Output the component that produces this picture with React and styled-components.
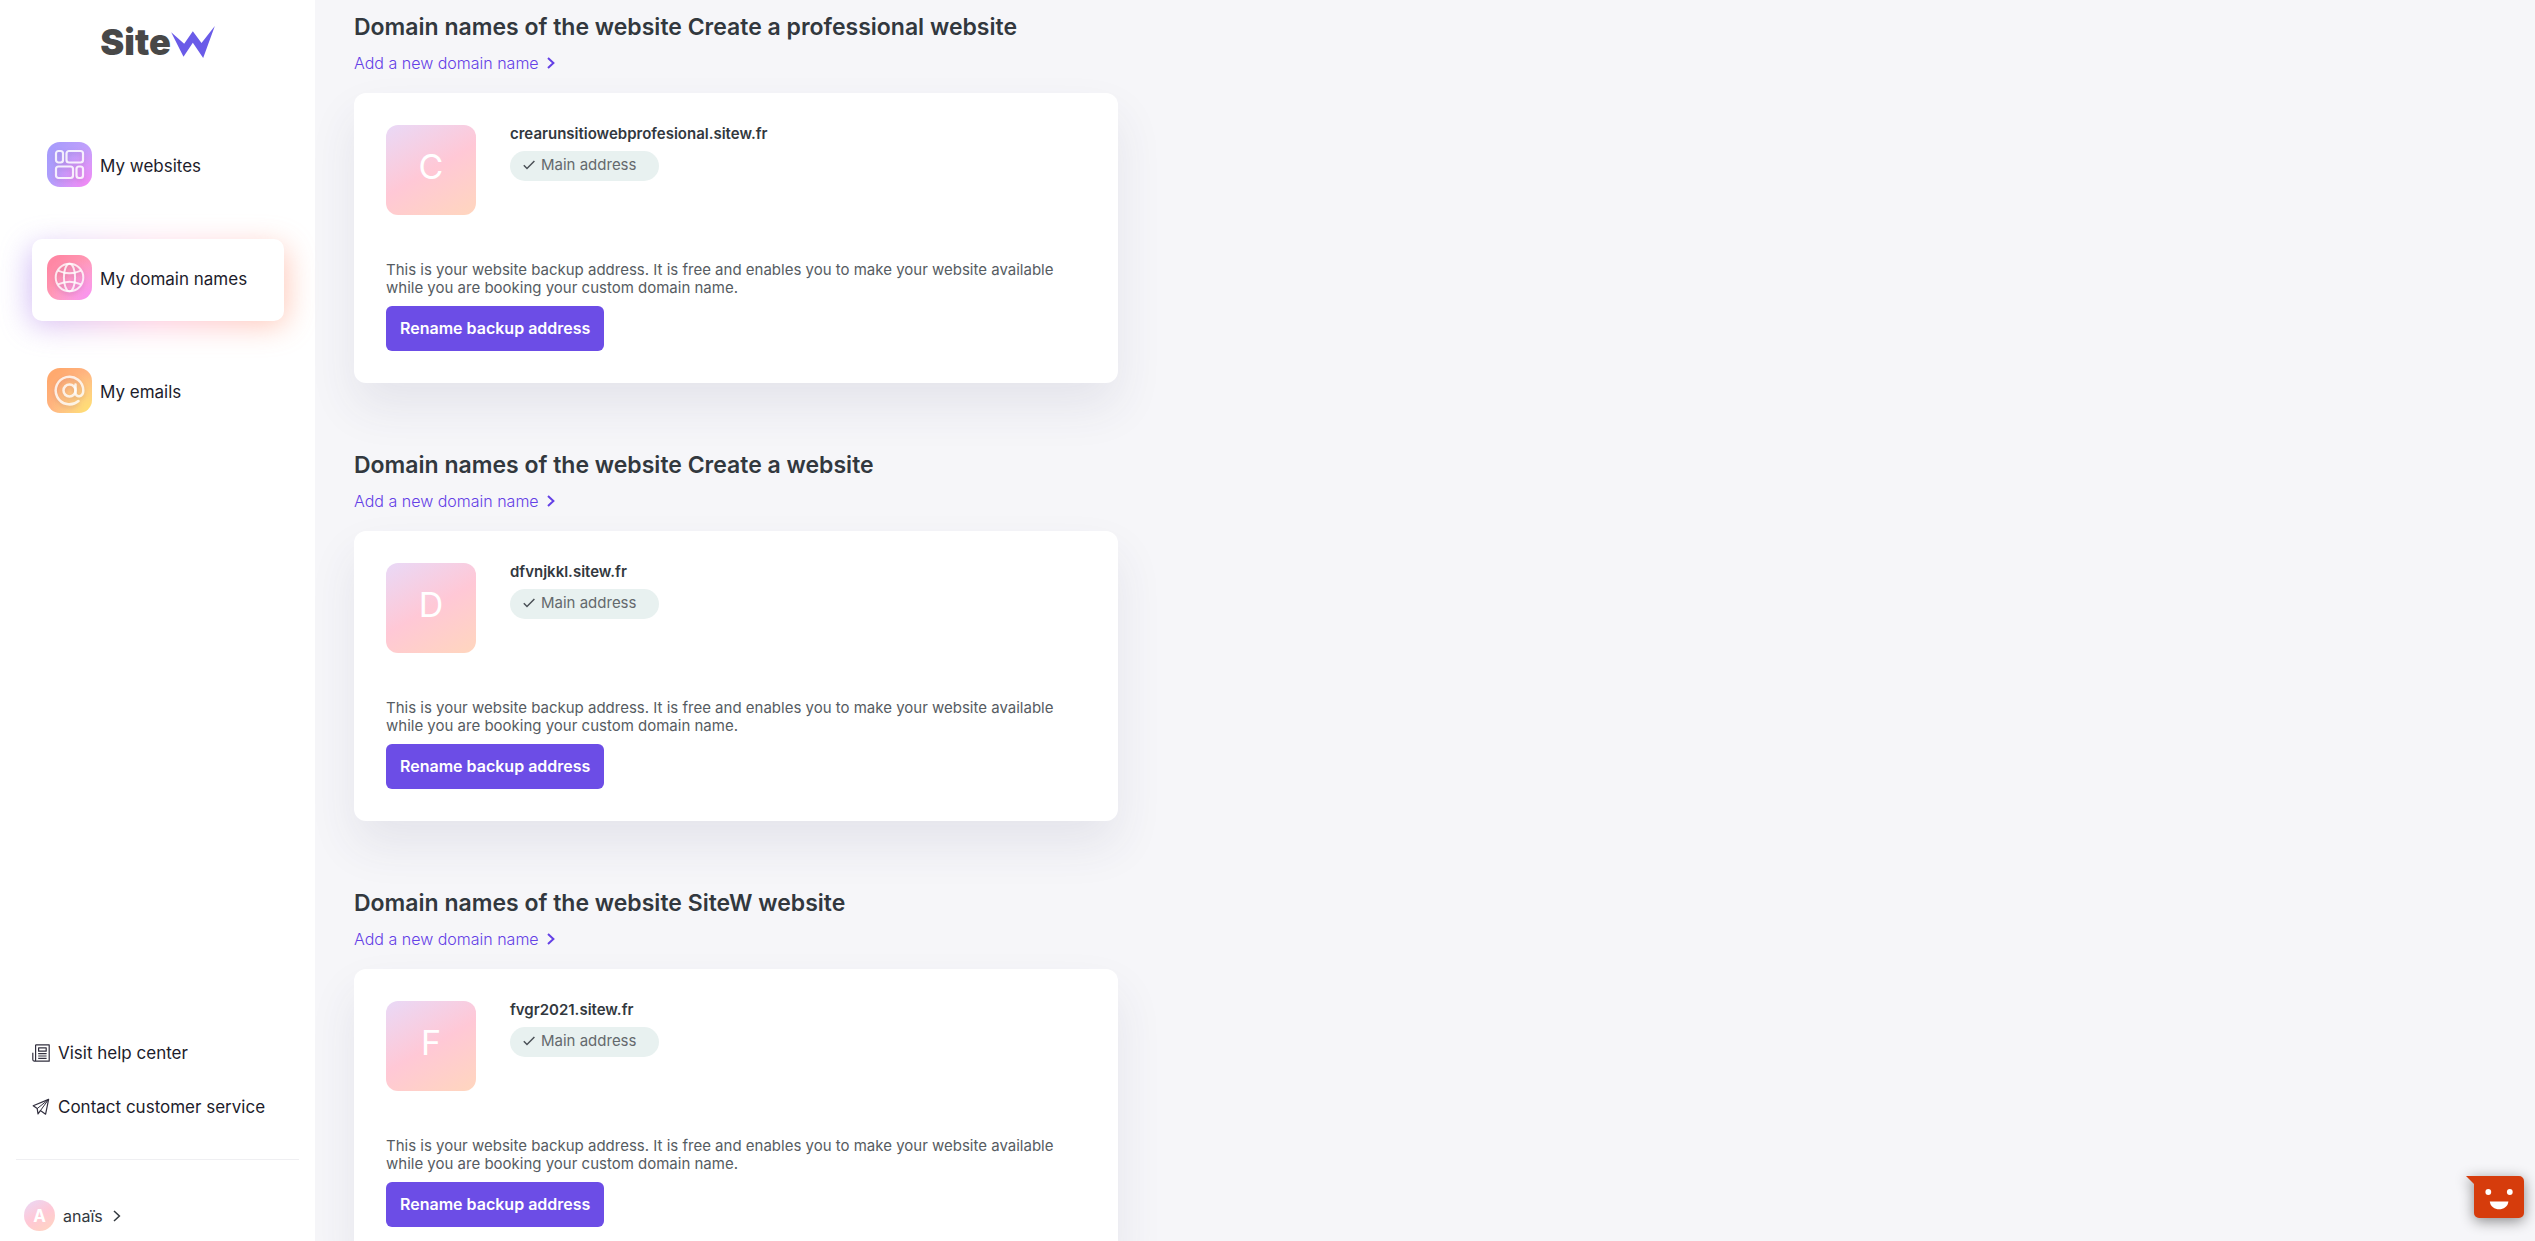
import React from "react";
import styled, { createGlobalStyle, css } from "styled-components";

const GlobalStyle = createGlobalStyle`
  *, *::before, *::after { box-sizing: border-box; }
  body {
    margin: 0;
    background: #f6f6f9;
    color: #32383e;
    font-family: Inter, "Open Sans", sans-serif;
    font-size: 16px;
  }
  h2, p { margin: 0; }
  a { color: inherit; text-decoration: none; }
  button { font-family: inherit; border: 0; cursor: pointer; }
  svg { display: block; flex: none; }
`;

const Shell = styled.div`
  display: flex;
  height: 100vh;
`;

/* ---------- sidebar ---------- */

const Sidebar = styled.aside`
  display: flex;
  flex-direction: column;
  flex: none;
  width: 315px;
  padding: 20px 16px 10px;
  background: #fff;
  color: #1d1c2b;
`;

const Logo = styled.a`
  display: flex;
  justify-content: center;
  align-items: center;
  height: 44px;
  color: #484848;
  font-size: 36px;
  font-weight: 900;
  line-height: 44px;
`;

const MainNav = styled.nav`
  display: flex;
  flex-direction: column;
  gap: 31px;
  margin-top: 62px;
  padding: 0 15px 0 16px;
`;

const glow = css`
  &::before,
  &::after {
    content: "";
    position: absolute;
    z-index: -1;
    border-radius: 10px;
  }
  &::before {
    inset: 8px -2px -4px;
    background: linear-gradient(100deg, #a78bf5, #ff9fc4 50%, #ff9f7a);
    filter: blur(15px);
    opacity: 0.6;
  }
  &::after {
    inset: 0;
    background: #fff;
  }
`;

const NavItem = styled.a`
  position: relative;
  isolation: isolate;
  display: flex;
  align-items: center;
  gap: 8px;
  height: 82px;
  padding: 0 15px 5px;
  font-size: 17px;
  line-height: 24px;
  ${(p) => p.$active && glow}
`;

const NavIcon = styled.span`
  display: grid;
  place-items: center;
  width: 45px;
  height: 45px;
  border-radius: 13px;
  background: ${(p) => p.$fill};

  svg { filter: drop-shadow(0 2px 2px rgba(120, 60, 120, 0.25)); }
`;

const NavLabel = styled.span`
  padding-top: 3px;
`;

const SupportNav = styled.nav`
  display: flex;
  flex-direction: column;
  gap: 30px;
  margin-top: auto;
  padding: 0 16px 40px;
  border-bottom: 1px solid #efeff2;
`;

const SupportLink = styled.a`
  display: flex;
  align-items: center;
  gap: 8px;
  font-size: 17px;
  line-height: 24px;
`;

const Account = styled.button`
  display: flex;
  align-items: center;
  align-self: flex-start;
  gap: 8px;
  margin-top: 40px;
  padding: 0 8px;
  background: none;
  color: #32383e;
  font-size: 16px;
`;

const blush = "linear-gradient(150deg, #e9d9f7, #ffc8d6 50%, #ffd6be)";

const Avatar = styled.span`
  display: grid;
  place-items: center;
  width: 31px;
  height: 31px;
  border-radius: 50%;
  background: ${blush};
  color: #fff;
  font-size: 17px;
  font-weight: 700;
`;

/* ---------- domains ---------- */

const Main = styled.main`
  flex: 1;
  min-width: 0;
  padding: 13px 39px 0;
  overflow-y: auto;
  scrollbar-width: none;
`;

const Section = styled.section`
  margin-bottom: 68px;
`;

const Heading = styled.h2`
  font-size: 23px;
  font-weight: 600;
  line-height: 28px;
`;

const AddLink = styled.a`
  display: inline-flex;
  align-items: center;
  gap: 6px;
  margin: 10px 0 18px;
  color: #6440e6;
  font-size: 16px;
  font-weight: 300;
  line-height: 24px;
  vertical-align: top;
`;

const Card = styled.article`
  max-width: 764px;
  padding: 32px;
  border-radius: 12px;
  background: #fff;
  box-shadow: 0 24px 48px rgba(60, 60, 100, 0.09);
`;

const CardTop = styled.div`
  display: flex;
  gap: 34px;
`;

const Tile = styled.div`
  display: grid;
  place-items: center;
  flex: none;
  width: 90px;
  height: 90px;
  padding-bottom: 8px;
  border-radius: 12px;
  background: ${blush};
  color: #fff;
  font-size: 34px;
`;

const Domain = styled.div`
  display: flex;
  flex-direction: column;
  align-items: flex-start;
  gap: 8px;
`;

const DomainName = styled.p`
  font-size: 15px;
  font-weight: 600;
  line-height: 18px;
`;

const Pill = styled.span`
  display: flex;
  align-items: center;
  gap: 6px;
  height: 30px;
  padding: 0 23px 2px 13px;
  border-radius: 15px;
  background: #e8f1f0;
  color: #64696d;
  font-size: 15px;
  line-height: 18px;
`;

const Description = styled.p`
  margin: 46px 0 9px;
  color: #565c62;
  font-size: 15px;
  line-height: 18px;
`;

const PrimaryButton = styled.button`
  height: 45px;
  padding: 0 14px 2px;
  border-radius: 6px;
  background: #6c4de6;
  color: #fff;
  font-size: 16px;
  font-weight: 600;
  vertical-align: top;
`;

const ChatButton = styled.button`
  position: fixed;
  right: 11px;
  bottom: 23px;
  padding: 0;
  background: none;

  svg { filter: drop-shadow(0 3px 7px rgba(0, 0, 0, 0.45)); }
`;

/* ---------- drawings ---------- */

const LogoMark = () => (
  <svg width="44" height="32" viewBox="510 78 131 96" aria-hidden="true">
    <path d="M510 97 L549 131 L575 94 L601 129 L641 78 L606 174 L575 128 L547 170 Z" fill="#6a5be8" />
  </svg>
);

const LayoutIcon = () => (
  <svg width="31" height="31" viewBox="0 0 31 31" fill="none" stroke="#fff" strokeOpacity="0.85" strokeWidth="2.2">
    <rect x="2" y="2" width="7" height="11.5" rx="2.5" />
    <rect x="12.5" y="2" width="16.5" height="11.5" rx="2.5" />
    <rect x="2" y="17.5" width="17" height="11.5" rx="2.5" />
    <rect x="22.5" y="17.5" width="6.5" height="11.5" rx="2.5" />
  </svg>
);

const GlobeIcon = () => (
  <svg width="31" height="31" viewBox="0 0 31 31" fill="none" stroke="#fff" strokeOpacity="0.8" strokeWidth="2">
    <circle cx="15.5" cy="15.5" r="13.8" />
    <ellipse cx="15.5" cy="15.5" rx="5.6" ry="13.8" />
    <path d="M4 8.6 Q15.5 13.8 27 8.6 M4 22.4 Q15.5 17.2 27 22.4" />
  </svg>
);

const AtIcon = () => (
  <svg width="31" height="31" viewBox="0 0 31 31" fill="none" stroke="#fff" strokeOpacity="0.8" strokeWidth="2.5" strokeLinecap="round">
    <circle cx="15.5" cy="15.5" r="6" />
    <path d="M21.5 9.5 V17.5 C21.5 23 29.3 22.5 29.3 15.5 A13.8 13.8 0 1 0 24.5 26" />
  </svg>
);

const NewsIcon = () => (
  <svg width="18" height="18" viewBox="0 0 18 18" fill="none" stroke="#32303f" strokeWidth="1.2" strokeLinejoin="round" aria-hidden="true">
    <path d="M3.6 .8 H17.2 V17.2 H2.2 A1.6 1.6 0 0 1 .8 15.6 V8.8 M3.6 .8 V15.8 A1.3 1.3 0 0 1 2.2 17.2" />
    <rect x="6.6" y="3.8" width="7.6" height="3.4" />
    <path d="M6.2 9.6 H14.6 M6.2 12 H14.6 M6.2 14.4 H14.6" />
  </svg>
);

const PlaneIcon = () => (
  <svg width="18" height="18" viewBox="0 0 18 18" fill="none" stroke="#32303f" strokeWidth="1.2" strokeLinejoin="round" aria-hidden="true">
    <path d="M16.6 1.4 L1.2 7.8 L5.2 10.6 L6 15.8 L8.4 12.6 L13.6 16.2 Z" />
    <path d="M5.2 10.6 L16.6 1.4 L8.4 12.6" strokeWidth="1" />
  </svg>
);

const Chevron = ({ weight }) => (
  <svg width="12" height="12" viewBox="0 0 12 12" fill="none" stroke="currentColor" strokeWidth={weight} aria-hidden="true">
    <path d="M3 1 L8.4 6 L3 11" />
  </svg>
);

const Check = () => (
  <svg width="12" height="10" viewBox="0 0 12 10" fill="none" stroke="#4b5157" strokeWidth="1.5" aria-hidden="true">
    <path d="M.8 5.2 L4 8.5 L11.4 1" />
  </svg>
);

const ChatFace = () => (
  <svg width="58" height="42" viewBox="0 0 58 42" aria-hidden="true">
    <path d="M0 0 H53 A5 5 0 0 1 58 5 V37 A5 5 0 0 1 53 42 H13 A5 5 0 0 1 8 37 V8 Z" fill="#d63c0c" />
    <circle cx="22.3" cy="16" r="2.9" fill="#fff" />
    <circle cx="43.8" cy="16" r="2.9" fill="#fff" />
    <path d="M23.8 25.4 H42.4 C41.4 35.8 24.8 35.8 23.8 25.4 Z" fill="#fff" />
  </svg>
);

/* ---------- data ---------- */

const navItems = [
  {
    label: "My websites",
    icon: <LayoutIcon />,
    fill: "radial-gradient(circle at 90% 95%, #f08af5, transparent 65%), linear-gradient(110deg, #a39bfc, #cda2fb)",
  },
  {
    label: "My domain names",
    icon: <GlobeIcon />,
    fill: "radial-gradient(circle at 95% 95%, #f992f0, transparent 65%), linear-gradient(135deg, #ff87a4 15%, #ffb0cd)",
    active: true,
  },
  {
    label: "My emails",
    icon: <AtIcon />,
    fill: "radial-gradient(circle at 95% 95%, #ffdf72, transparent 65%), linear-gradient(135deg, #ffa96e 15%, #ffc59c)",
  },
];

const sites = [
  { name: "Create a professional website", domain: "crearunsitiowebprofesional.sitew.fr" },
  { name: "Create a website", domain: "dfvnjkkl.sitew.fr" },
  { name: "SiteW website", domain: "fvgr2021.sitew.fr" },
];

const SiteDomains = ({ name, domain }) => (
  <Section>
    <Heading>Domain names of the website {name}</Heading>
    <AddLink href="#add">
      Add a new domain name
      <Chevron weight={2} />
    </AddLink>
    <Card>
      <CardTop>
        <Tile>{domain[0].toUpperCase()}</Tile>
        <Domain>
          <DomainName>{domain}</DomainName>
          <Pill>
            <Check />
            Main address
          </Pill>
        </Domain>
      </CardTop>
      <Description>
        This is your website backup address. It is free and enables you to make your website available while you are
        booking your custom domain name.
      </Description>
      <PrimaryButton type="button">Rename backup address</PrimaryButton>
    </Card>
  </Section>
);

export default function App() {
  return (
    <Shell>
      <GlobalStyle />
      <Sidebar>
        <Logo href="#home">
          Site
          <LogoMark />
        </Logo>
        <MainNav>
          {navItems.map((item) => (
            <NavItem key={item.label} href="#nav" $active={item.active}>
              <NavIcon $fill={item.fill}>{item.icon}</NavIcon>
              <NavLabel>{item.label}</NavLabel>
            </NavItem>
          ))}
        </MainNav>
        <SupportNav>
          <SupportLink href="#help">
            <NewsIcon />
            Visit help center
          </SupportLink>
          <SupportLink href="#contact">
            <PlaneIcon />
            Contact customer service
          </SupportLink>
        </SupportNav>
        <Account type="button">
          <Avatar>A</Avatar>
          anaïs
          <Chevron weight={1.5} />
        </Account>
      </Sidebar>
      <Main>
        {sites.map((site) => (
          <SiteDomains key={site.domain} {...site} />
        ))}
      </Main>
      <ChatButton type="button" aria-label="Open chat">
        <ChatFace />
      </ChatButton>
    </Shell>
  );
}
